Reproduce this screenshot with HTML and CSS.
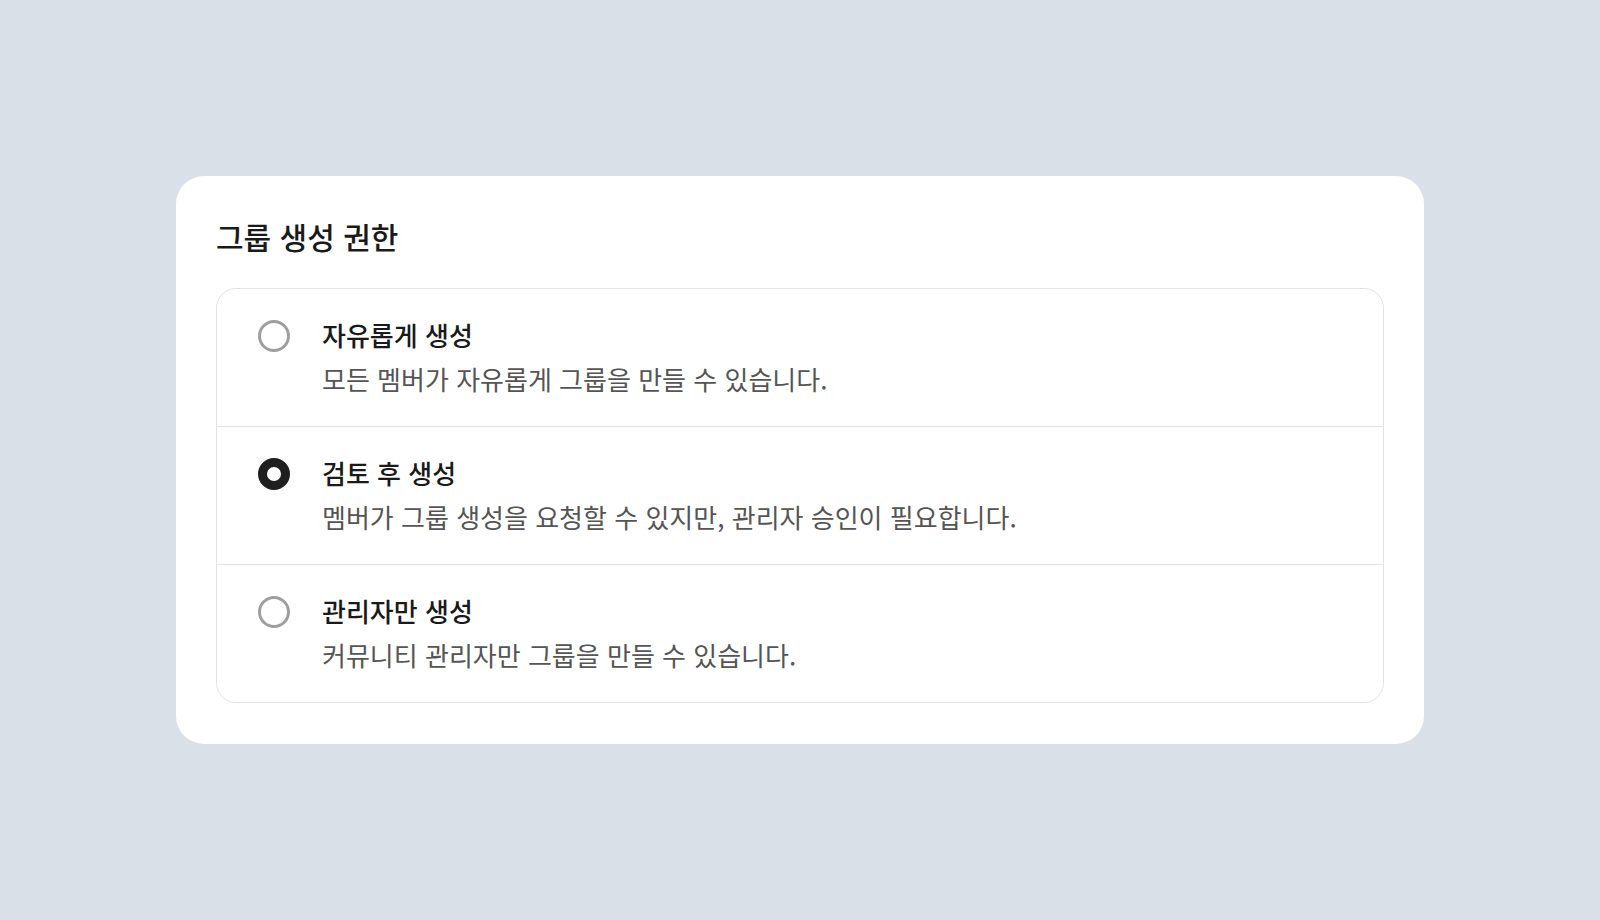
FILE: index.html
```html
<!DOCTYPE html>
<html lang="ko">
<head>
    <meta charset="UTF-8">
    <meta name="viewport" content="width=device-width, initial-scale=1.0">
    <title>그룹 생성 권한</title>
    <link rel="stylesheet" href="styles.css">
</head>
<body>
    <div class="card">
        <div class="card-title">그룹 생성 권한</div>

        <div class="options">
            <label class="option">
                <span class="radio"></span>
                <span class="option-text">
                    <span class="option-label">자유롭게 생성</span>
                    <span class="option-desc">모든 멤버가 자유롭게 그룹을 만들 수 있습니다.</span>
                </span>
            </label>

            <label class="option">
                <span class="radio checked"></span>
                <span class="option-text">
                    <span class="option-label">검토 후 생성</span>
                    <span class="option-desc">멤버가 그룹 생성을 요청할 수 있지만, 관리자 승인이 필요합니다.</span>
                </span>
            </label>

            <label class="option">
                <span class="radio"></span>
                <span class="option-text">
                    <span class="option-label">관리자만 생성</span>
                    <span class="option-desc">커뮤니티 관리자만 그룹을 만들 수 있습니다.</span>
                </span>
            </label>
        </div>
    </div>
</body>
</html>
```

FILE: styles.css
```css
:root {
    --bg: #d9e0e8;
    --card: #ffffff;
    --text: #1a1a1a;
    --muted: #555555;
    --line: #e3e3e3;
    --radio: #9e9e9e;
    --radio-on: #1f1f1f;
}
* {
    box-sizing: border-box;
}
html, body {
    height: 100%;
}
body {
    margin: 0;
    background-color: var(--bg);
    font-family: "Noto Sans CJK KR", "Noto Sans", sans-serif;
    color: var(--text);
    display: flex;
    align-items: center;
    justify-content: center;
}
.card {
    width: 1248px;
    background: var(--card);
    border-radius: 28px;
    padding: 40px 40px 41px;
}
.card-title {
    font-size: 30px;
    line-height: 40px;
    font-weight: 500;
    margin-bottom: 32px;
}
.options {
    border: 1px solid var(--line);
    border-radius: 20px;
}
.option {
    display: flex;
    align-items: flex-start;
    gap: 32px;
    padding: 28px 41px 29px;
    border-bottom: 1px solid var(--line);
    cursor: pointer;
}
.option:last-child {
    border-bottom: none;
}
.radio {
    flex: none;
    width: 32px;
    height: 32px;
    margin-top: 3px;
    border-radius: 50%;
    border: 3px solid var(--radio);
}
.radio.checked {
    border: 9px solid var(--radio-on);
}
.option-text {
    display: flex;
    flex-direction: column;
    gap: 8px;
}
.option-label {
    font-size: 26px;
    line-height: 36px;
    font-weight: 500;
    color: var(--text);
}
.option-desc {
    font-size: 26px;
    line-height: 36px;
    color: var(--muted);
}
```
